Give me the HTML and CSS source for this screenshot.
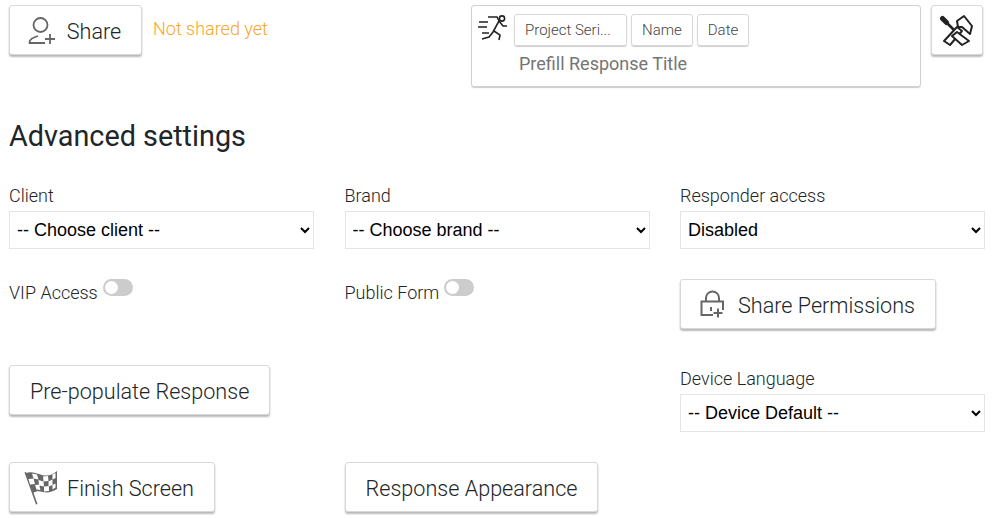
FILE: index.html
```html
<!DOCTYPE html>
<html lang="en">
<head>
<meta charset="utf-8">
<title>Advanced settings</title>
<link rel="stylesheet" href="styles.css">
</head>
<body>
<header class="top">
  <button class="btn share-btn" type="button">
    <svg class="icon" width="30" height="30" viewBox="0 0 30 30" fill="none" stroke="#666" stroke-width="1.800">
      <circle cx="14.500" cy="9" r="7"/>
      <path d="M3.500 27.500v-1c0-3 3-5 8.500-6.500M3 27h16M19 23h10M24 18v10"/>
    </svg>
    <span>Share</span>
  </button>
  <span class="status">Not shared yet</span>
  <section class="prefill">
    <div class="chips">
      <svg class="runner" width="30" height="28" viewBox="0 0 30 28" fill="none" stroke="#222" stroke-width="1.600">
        <circle cx="25" cy="4.500" r="2.600"/>
        <path d="M2 8h9M1 13h9M5 19h7M11 3h9l2 4-6 11-4 5-7 2M17 17l6 4-1 5M22 7l4 5h4"/>
      </svg>
      <span class="chip chip-project">Project Seri...</span>
      <span class="chip">Name</span>
      <span class="chip">Date</span>
    </div>
    <div class="prefill-title">Prefill Response Title</div>
  </section>
  <button class="btn tool-btn" type="button" aria-label="Tools">
    <svg width="34" height="34" viewBox="0 0 34 34" fill="#fff" stroke="#222" stroke-width="2" stroke-linejoin="round">
      <path d="M4 28 17 14l5 4L10 32z"/>
      <path d="M17 8l7-5 8 10-2 8-8-7h-4z"/>
      <path d="M17 19l12 9-7 4-10-9z"/>
      <path d="M3 6l11 11" stroke-width="2.600"/>
      <path d="M2.500 5.500l4 4" stroke-width="5" stroke-linecap="round"/>
    </svg>
  </button>
</header>

<h1 class="heading">Advanced settings</h1>

<main class="settings">
  <div class="field">
    <label class="label" for="client">Client</label>
    <select class="select" id="client"><option>-- Choose client --</option></select>
  </div>
  <div class="field">
    <label class="label" for="brand">Brand</label>
    <select class="select" id="brand"><option>-- Choose brand --</option></select>
  </div>
  <div class="field">
    <label class="label" for="access">Responder access</label>
    <select class="select" id="access"><option>Disabled</option></select>
  </div>

  <div class="toggle-row">
    <span class="label">VIP Access</span>
    <span class="toggle"></span>
  </div>
  <div class="toggle-row">
    <span class="label">Public Form</span>
    <span class="toggle"></span>
  </div>
  <div class="perm-cell">
    <button class="btn perm-btn" type="button">
      <svg class="icon" width="30" height="30" viewBox="0 0 30 30" fill="none" stroke="#666" stroke-width="2">
        <path d="M8 11V8a6.500 6.500 0 0 1 13 0v3"/>
        <path d="M15 25H3.500V11.500H25V20"/>
        <path d="M13 17v4M15.500 23h9M20 18.500v9"/>
      </svg>
      <span>Share Permissions</span>
    </button>
  </div>

  <div class="cell-prepop">
    <button class="btn plain-btn" type="button"><span>Pre-populate Response</span></button>
  </div>
  <div class="field cell-lang">
    <label class="label" for="lang">Device Language</label>
    <select class="select" id="lang"><option>-- Device Default --</option></select>
  </div>

  <div class="cell-finish">
    <button class="btn finish-btn" type="button">
      <svg class="icon" width="36" height="36" viewBox="0 0 36 36">
        <path d="M1.500 2.500 3 2l11.500 32-1.500.500z" fill="#666"/>
        <path d="M3 3c5-2 10 0 16 2 6 1.500 10 0 15-4v18c-5 3-9 4-14 3-4-1-7-1-10 1z" fill="#666"/>
        <path d="M9 3.500l5 1 1.500 5-5-1zM20 6.500l5-.500.500 5-5 .500zM29.500 4.500l3-1.500v5l-3 1.500zM5.500 9l5-.500 1.500 5.500-5 .500zM15.500 10l5 1.500.500 5-5-1zM25.500 11.500l4-2v5.500l-4 1.500zM12 15l4-.500 1.500 5.500-4-.500zM21 16.500l5-.500v5l-5 .500zM29.500 15l3-1.500v4l-3 2z" fill="#fff"/>
      </svg>
      <span>Finish Screen</span>
    </button>
  </div>
  <div class="cell-appearance">
    <button class="btn plain-btn" type="button"><span>Response Appearance</span></button>
  </div>
</main>
</body>
</html>
```
FILE: styles.css
```css
* { box-sizing: border-box; }

html, body { margin: 0; height: 518px; overflow: hidden; }

body {
  background: #fff;
  color: #212529;
  font-family: Roboto, "Liberation Sans", sans-serif;
  font-weight: 300;
  padding: 5px 9px 0 9px;
}

.top { display: flex; align-items: flex-start; height: 82px; }

.btn {
  display: inline-flex;
  align-items: center;
  justify-content: center;
  height: 50px;
  padding: 2px 20px 0;
  background: #fff;
  border: 1px solid #d8d8d8;
  border-radius: 3px;
  box-shadow: 0 2px 2px rgba(0, 0, 0, 0.28);
  color: #212529;
  font: 300 21.600px Roboto, sans-serif;
  white-space: nowrap;
}

.icon { flex: none; }

.share-btn { width: 133px; gap: 11px; padding: 2px 4px 0 0; }

.status { margin: 13px 0 0 11px; color: #fba625; font-size: 18px; line-height: 22px; }

.prefill {
  width: 450px;
  height: 82px;
  margin-left: auto;
  padding: 8px 6px 0 5px;
  border: 1px solid #d0d0d0;
  border-radius: 3px;
  box-shadow: 0 1px 1px rgba(0, 0, 0, 0.2);
}

.chips { display: flex; align-items: flex-start; gap: 4px; }

.runner { margin: 0 3px 0 0; flex: none; }

.chip {
  display: block;
  height: 32px;
  padding: 0 10px;
  border: 1px solid #d8d8d8;
  border-radius: 3px;
  box-shadow: 0 1px 1px rgba(0, 0, 0, 0.2);
  color: #444;
  font-size: 15px;
  font-weight: 300;
  line-height: 30px;
  white-space: nowrap;
}

.chip-project { width: 113px; }

.prefill-title {
  margin: 7px 0 0 42px;
  color: #757575;
  font-size: 18px;
  font-weight: 400;
  line-height: 22px;
}

.tool-btn { width: 52px; margin-left: 10px; padding: 0; }

.heading {
  margin: 0;
  height: 96px;
  padding-top: 29px;
  font-size: 28.800px;
  font-weight: 400;
  line-height: 40px;
}

.settings {
  display: grid;
  grid-template-columns: 305px 305px 305px;
  column-gap: 30.500px;
  grid-template-rows: 66px 86px 127px 50px;
  width: 976px;
}

.field { display: flex; flex-direction: column; }

.label { display: block; color: #212529; font-size: 18px; line-height: 22px; }

.field .label { height: 22px; margin-top: 2px; }

.select {
  width: 100%;
  height: 38px;
  padding: 0 3px;
  background: #fff;
  border: 1px solid #e4e4e4;
  border-radius: 0;
  color: #000;
  font: 400 18px "Liberation Sans", Arial, sans-serif;
}

.field .select { margin-top: 4px; }

.toggle-row { display: flex; align-items: flex-start; gap: 5px; padding-top: 23px; }

.toggle-row .label { padding-top: 10px; }

.toggle {
  position: relative;
  display: block;
  width: 30px;
  height: 17px;
  margin-top: 7px;
  background: #ccc;
  border-radius: 9px;
}

.toggle::before {
  content: "";
  position: absolute;
  left: 2px;
  top: 2px;
  width: 13px;
  height: 13px;
  background: #fff;
  border-radius: 50%;
}

.perm-cell { padding-top: 30px; }

.perm-btn { width: 256px; gap: 10px; padding: 2px 3px 0 0; }

.cell-prepop { grid-row: 3; grid-column: 1; padding-top: 30px; }

.cell-lang { grid-row: 3; grid-column: 3; padding-top: 33px; }

.cell-lang .label { margin-top: 0; }

.cell-finish { grid-row: 4; grid-column: 1; }

.cell-appearance { grid-row: 4; grid-column: 2; }

.finish-btn { width: 206px; gap: 8px; padding: 2px 7px 0 0; }
```
